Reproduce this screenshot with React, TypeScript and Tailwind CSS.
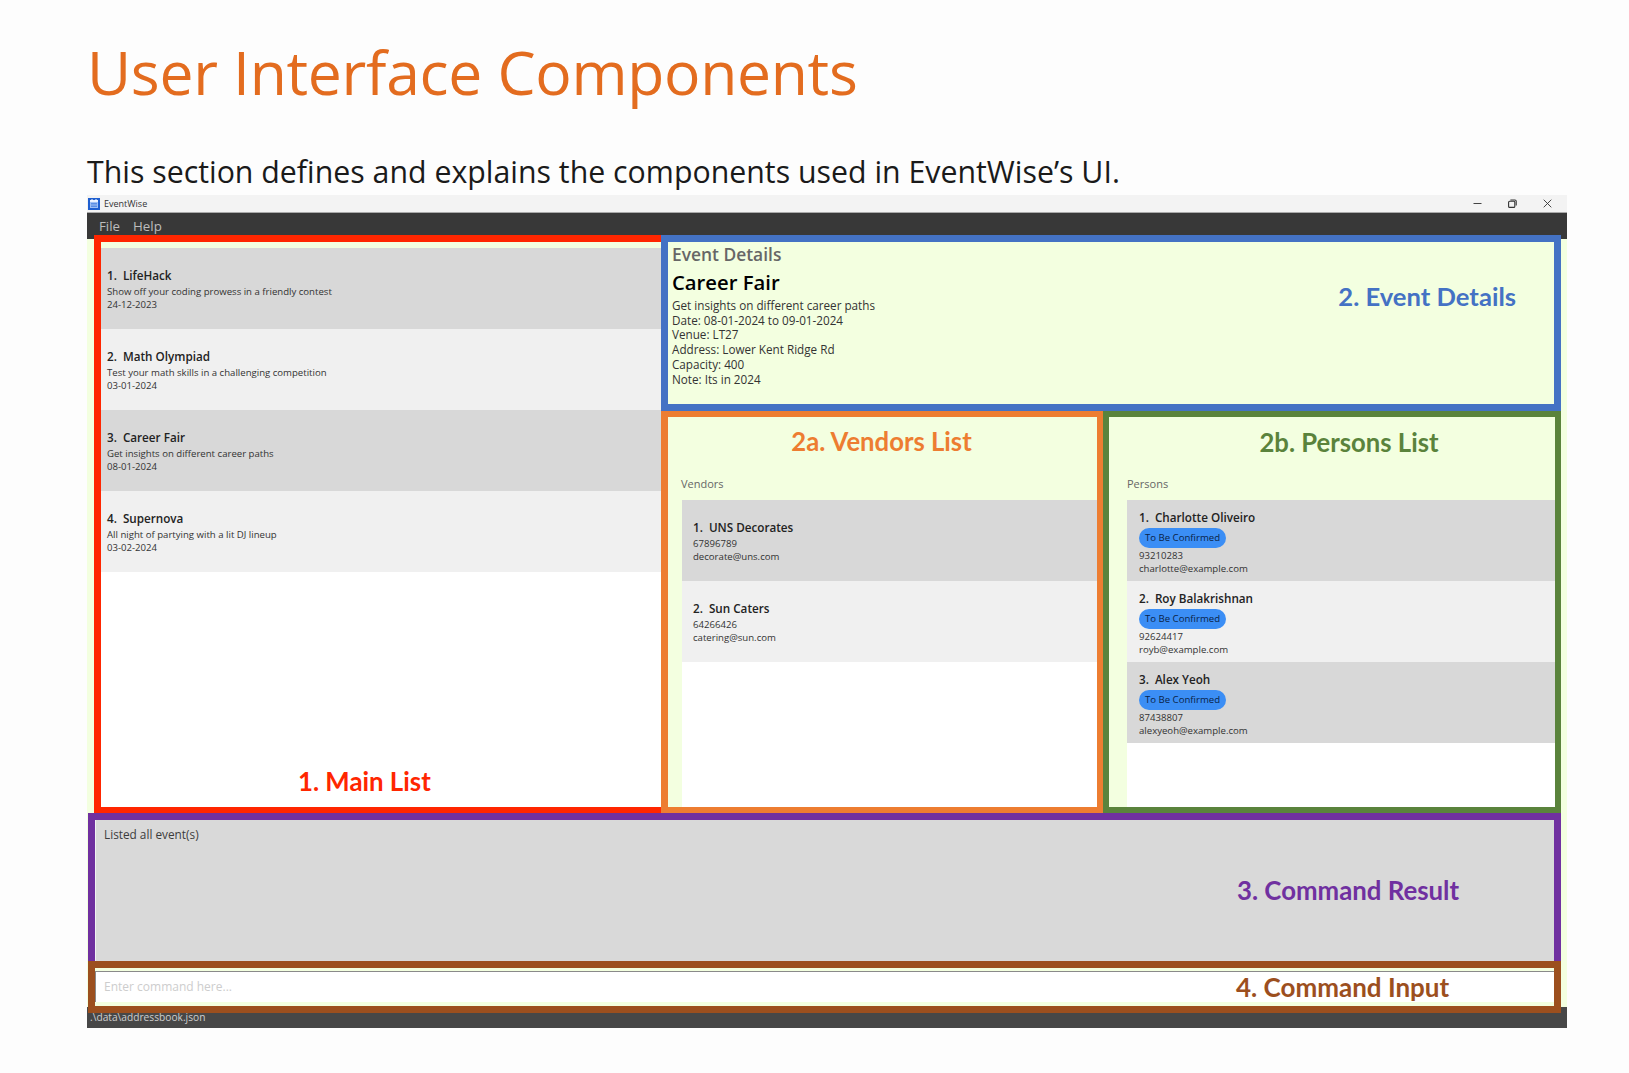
import React from 'react';

const events = [
  { no: '1.', name: 'LifeHack', desc: 'Show off your coding prowess in a friendly contest', date: '24-12-2023' },
  { no: '2.', name: 'Math Olympiad', desc: 'Test your math skills in a challenging competition', date: '03-01-2024' },
  { no: '3.', name: 'Career Fair', desc: 'Get insights on different career paths', date: '08-01-2024' },
  { no: '4.', name: 'Supernova', desc: 'All night of partying with a lit DJ lineup', date: '03-02-2024' },
];

const vendors = [
  { no: '1.', name: 'UNS Decorates', phone: '67896789', email: 'decorate@uns.com' },
  { no: '2.', name: 'Sun Caters', phone: '64266426', email: 'catering@sun.com' },
];

const persons = [
  { no: '1.', name: 'Charlotte Oliveiro', phone: '93210283', email: 'charlotte@example.com' },
  { no: '2.', name: 'Roy Balakrishnan', phone: '92624417', email: 'royb@example.com' },
  { no: '3.', name: 'Alex Yeoh', phone: '87438807', email: 'alexyeoh@example.com' },
];

const eventLines = [
  'Get insights on different career paths',
  'Date: 08-01-2024 to 09-01-2024',
  'Venue: LT27',
  'Address: Lower Kent Ridge Rd',
  'Capacity: 400',
  'Note: Its in 2024',
];

const Name: React.FC<{ no: string; name: string }> = ({ no, name }) => (
  <div className="text-[11.7px] leading-[19px] font-semibold text-[#222] whitespace-nowrap">
    <span className="mr-[6px]">{no}</span>
    {name}
  </div>
);

const Detail: React.FC<{ children: React.ReactNode }> = ({ children }) => (
  <div className="text-[9.6px] leading-[13px] text-[#333] whitespace-nowrap">{children}</div>
);

const rowColor = (i: number) => (i % 2 === 0 ? 'bg-[#d8d8d8]' : 'bg-[#f0f0f0]');

const App: React.FC = () => {
  return (
    <div className="w-full h-[1073px] overflow-hidden bg-[#fdfdfd] pl-[87px] pr-[62px] font-['Open_Sans',sans-serif]">
      <h1 className="pt-[34px] h-[148px] text-[60.6px] leading-[76px] tracking-[-0.3px] font-normal text-[#e36c1f] whitespace-nowrap">
        User Interface Components
      </h1>
      <p className="h-[47px] pt-[4px] text-[30.3px] leading-[40px] text-[#1a1a1a] whitespace-nowrap">
        This section defines and explains the components used in EventWise’s UI.
      </p>

      <div className="w-[1480px] bg-[#f3ffe0] flex flex-col">
        {/* title bar */}
        <div className="h-[18px] bg-[#f3f3f3] border-b border-[#aaa] flex items-center">
          <svg className="ml-[1px] w-[12px] h-[12px]" viewBox="0 0 12 12">
            <rect width="12" height="12" fill="#1f5fd0" />
            <rect x="2" y="2" width="8" height="8" fill="#9fc0f5" />
            <rect x="2" y="2" width="8" height="2" fill="#e8f0ff" />
            <rect x="3.5" y="1" width="1" height="2" fill="#fff" />
            <rect x="7.5" y="1" width="1" height="2" fill="#fff" />
            <path d="M3 5.5H9M3 7H9M3 8.5H9" stroke="#2f6bd8" strokeWidth="0.6" />
          </svg>
          <span className="ml-[4px] text-[9px] text-[#333]">EventWise</span>
          <div className="ml-auto flex items-center gap-[26px] mr-[15px]">
            <svg className="w-[9px] h-[9px]" viewBox="0 0 9 9">
              <path d="M0.5 4.5H8.5" stroke="#444" strokeWidth="1" />
            </svg>
            <svg className="w-[9px] h-[9px]" viewBox="0 0 9 9" fill="none" stroke="#333" strokeWidth="1.1">
              <rect x="0.6" y="2.2" width="6.2" height="6.2" rx="1" />
              <path d="M2.4 1H7a1.2 1.2 0 0 1 1.2 1.2V6.6" />
            </svg>
            <svg className="w-[9px] h-[9px]" viewBox="0 0 9 9">
              <path d="M0.7 0.7L8.3 8.3M8.3 0.7L0.7 8.3" stroke="#333" strokeWidth="0.9" />
            </svg>
          </div>
        </div>

        {/* menu bar */}
        <div className="h-[26px] bg-[#383838] flex items-start pl-[12px] gap-[13px] pt-[2px] text-[13.3px] leading-[22px] text-[#bdbdbd]">
          <span>File</span>
          <span>Help</span>
        </div>

        {/* panels */}
        <div className="flex h-[578px] -mt-[4px] pl-[7px] pr-[6px]">
          <div className="w-[567px] border-[#ff2600] border-l-[7px] border-t-[7px] border-b-[6px] bg-white flex flex-col">
            <div className="h-[6px] bg-[#f3ffe0]" />
            {events.map((e, i) => (
              <div key={e.no} className={`h-[81px] shrink-0 pl-[6px] flex flex-col justify-center ${rowColor(i)}`}>
                <Name no={e.no} name={e.name} />
                <Detail>{e.desc}</Detail>
                <Detail>{e.date}</Detail>
              </div>
            ))}
            <div className="mt-auto mb-[10px] ml-[197px] font-['Lato',sans-serif] text-[25.8px] leading-[32px] font-bold text-[#ff2600]">
              1. Main List
            </div>
          </div>

          <div className="flex-1 flex flex-col">
            <div className="h-[176px] border-[7px] border-[#4472c4] bg-[#f3ffe0] flex justify-between pl-[4px]">
              <div>
                <div className="mt-px text-[17.4px] leading-[22px] font-semibold text-[#666]">Event Details</div>
                <div className="mt-[3px] text-[20.3px] leading-[28px] font-semibold text-black">Career Fair</div>
                <div className="mt-[2px]">
                  {eventLines.map((line) => (
                    <div key={line} className="text-[11.7px] leading-[14.7px] text-[#333] whitespace-nowrap">
                      {line}
                    </div>
                  ))}
                </div>
              </div>
              <div className="mt-[38px] mr-[38px] font-['Lato',sans-serif] text-[25.6px] leading-[32px] font-bold text-[#4472c4] whitespace-nowrap">
                2. Event Details
              </div>
            </div>

            <div className="flex-1 flex">
              <div className="w-[442px] border-[#ed7d31] border-l-[7px] border-r-[6px] border-t-[6px] border-b-[6px] bg-[#f3ffe0] flex flex-col">
                <div className="mt-[8px] pr-[2px] h-[32px] text-center font-['Lato',sans-serif] text-[25.7px] leading-[32px] font-bold text-[#ed7d31]">
                  2a. Vendors List
                </div>
                <div className="h-[22px] mt-[16px] pl-[13px] text-[11px] leading-[22px] text-[#666]">Vendors</div>
                <div className="ml-[14px] mt-[5px] flex-1 bg-white">
                  {vendors.map((v, i) => (
                    <div key={v.no} className={`h-[81px] pl-[11px] flex flex-col justify-center ${rowColor(i)}`}>
                      <Name no={v.no} name={v.name} />
                      <Detail>{v.phone}</Detail>
                      <Detail>{v.email}</Detail>
                    </div>
                  ))}
                </div>
              </div>

              <div className="flex-1 border-[#5a833c] border-[6.5px] bg-[#f3ffe0] flex flex-col">
                <div className="mt-[9px] pl-[34px] h-[32px] text-center font-['Lato',sans-serif] text-[25.7px] leading-[32px] font-bold text-[#5a833c]">
                  2b. Persons List
                </div>
                <div className="h-[22px] mt-[15px] pl-[18px] text-[11px] leading-[22px] text-[#666]">Persons</div>
                <div className="ml-[18px] mt-[5px] flex-1 bg-white">
                  {persons.map((p, i) => (
                    <div key={p.no} className={`h-[81px] pl-[12px] pt-[8px] ${rowColor(i)}`}>
                      <Name no={p.no} name={p.name} />
                      <div className="mt-px w-[87px] h-[20px] rounded-full bg-[#3b8ef5] text-center text-[9.6px] leading-[20px] text-[#0a2347]">
                        To Be Confirmed
                      </div>
                      <div className="mt-px">
                        <Detail>{p.phone}</Detail>
                        <Detail>{p.email}</Detail>
                      </div>
                    </div>
                  ))}
                </div>
              </div>
            </div>
          </div>
        </div>

        {/* command result */}
        <div className="ml-px mr-[6px] h-[148px] border-[#7030a0] border-l-[7px] border-r-[7px] border-t-[7px] bg-[#d9d9d9] flex justify-between">
          <div className="border-l border-[#f2f2f2] pl-[8px] pt-[4px] text-[11.8px] leading-[20px] text-[#3c3c3c]">
            Listed all event(s)
          </div>
          <div className="mt-[54px] mr-[94px] w-[223px] font-['Lato',sans-serif] text-[25.8px] leading-[32px] font-bold text-[#7030a0] whitespace-nowrap">
            3. Command Result
          </div>
        </div>

        {/* command input */}
        <div className="relative z-10 ml-px mr-[6px] h-[52px] border-[#9c4f1e] border-l-[7px] border-r-[7px] border-t-[7px] border-b-[7px] bg-[#f3ffe0] pt-[3px] pb-[4px]">
          <div className="h-full bg-white border-t border-l border-[#8a8a8a] flex items-center justify-between">
            <input
              placeholder="Enter command here..."
              className="flex-1 pl-[8px] text-[12px] outline-none bg-transparent placeholder:text-[#cdcdcd]"
            />
            <span className="mr-[105px] w-[213px] font-['Lato',sans-serif] text-[26px] leading-[30px] font-bold text-[#9c4f1e] whitespace-nowrap">
              4. Command Input
            </span>
          </div>
        </div>

        {/* status bar */}
        <div className="-mt-[6px] h-[21px] bg-[#474747] pl-[3px] pt-[3px] text-[10.2px] leading-[15px] text-[#cfcfcf]">
          .\data\addressbook.json
        </div>
      </div>
    </div>
  );
};

export default App;
